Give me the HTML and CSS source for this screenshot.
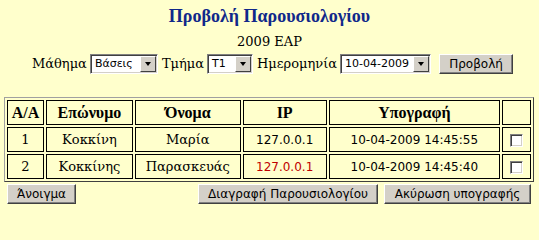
FILE: index.html
```html
<!DOCTYPE html>
<html>
<head>
<meta charset="utf-8">
<link rel="stylesheet" href="styles.css">
</head>
<body>
<div class="page">
  <h1 class="title">Προβολή Παρουσιολογίου</h1>
  <div class="sub">2009 ΕΑΡ</div>
  <div class="form-row">
    <span class="lbl">Μάθημα</span>
    <span class="sel sel-course"><span class="sel-text">Βάσεις</span><span class="sel-btn"><span class="arrow"></span></span></span>
    <span class="lbl">Τμήμα</span>
    <span class="sel sel-class"><span class="sel-text">T1</span><span class="sel-btn"><span class="arrow"></span></span></span>
    <span class="lbl">Ημερομηνία</span>
    <span class="sel sel-date"><span class="sel-text">10-04-2009</span><span class="sel-btn"><span class="arrow"></span></span></span>
    <span class="btn btn-view">Προβολή</span>
  </div>
  <table class="grid">
    <tr class="head">
      <th class="c-aa">A/A</th>
      <th class="c-sur">Επώνυμο</th>
      <th class="c-name">Όνομα</th>
      <th class="c-ip">IP</th>
      <th class="c-sig">Υπογραφή</th>
      <th class="c-chk"></th>
    </tr>
    <tr>
      <td>1</td>
      <td>Κοκκίνη</td>
      <td>Μαρία</td>
      <td class="sans">127.0.0.1</td>
      <td class="sans">10-04-2009 14:45:55</td>
      <td><span class="chk"></span></td>
    </tr>
    <tr>
      <td>2</td>
      <td>Κοκκίνης</td>
      <td>Παρασκευάς</td>
      <td class="sans red">127.0.0.1</td>
      <td class="sans">10-04-2009 14:45:40</td>
      <td><span class="chk"></span></td>
    </tr>
  </table>
  <div class="actions">
    <span class="btn btn-open">Άνοιγμα</span>
    <div class="actions-right">
      <span class="btn btn-del">Διαγραφή Παρουσιολογίου</span>
      <span class="btn btn-cancel">Ακύρωση υπογραφής</span>
    </div>
  </div>
</div>
</body>
</html>
```
FILE: styles.css
```css
html, body {
  margin: 0;
  padding: 0;
  background: #ffffcc;
}
body {
  font-family: "DejaVu Serif", "Liberation Serif", serif;
  font-size: 14px;
  color: #000;
}
.page {
  width: 539px;
  height: 215px;
  overflow: hidden;
  padding-top: 6px;
  box-sizing: border-box;
}
.title {
  margin: 0;
  text-align: center;
  font-family: "Liberation Serif", serif;
  font-size: 18px;
  font-weight: bold;
  color: #10288a;
  line-height: 20px;
  height: 20px;
}
.sub {
  text-align: center;
  margin-top: 8px;
  line-height: 16px;
  height: 16px;
  font-size: 13px;
}
.form-row {
  display: flex;
  justify-content: center;
  align-items: center;
  margin-top: 4px;
  padding-left: 2px;
  height: 20px;
  white-space: nowrap;
}
.lbl {
  margin: 0 3px 0 4px;
  line-height: 16px;
  font-size: 13px;
}
.sel {
  display: inline-flex;
  align-items: stretch;
  height: 20px;
  box-sizing: border-box;
  border: 1px solid;
  border-color: #808080 #ffffff #ffffff #808080;
  background: #fff;
  font-family: "DejaVu Sans", "Liberation Sans", sans-serif;
  font-size: 11px;
  box-shadow: inset 1px 1px 0 #404040, inset -1px -1px 0 #d4d0c8;
  overflow: hidden;
}
.sel-text {
  flex: 1;
  padding: 0 2px 0 4px;
  line-height: 17px;
  white-space: nowrap;
  overflow: hidden;
}
.sel-btn {
  width: 16px;
  flex: none;
  box-sizing: border-box;
  margin: 1px 1px 1px 0;
  background: #d4d0c8;
  border: 1px solid;
  border-color: #ffffff #404040 #404040 #ffffff;
  display: flex;
  align-items: center;
  justify-content: center;
}
.arrow {
  width: 0;
  height: 0;
  border-left: 3.5px solid transparent;
  border-right: 3.5px solid transparent;
  border-top: 4px solid #000;
}
.sel-course { width: 68px; }
.sel-class { width: 46px; }
.sel-date { width: 91px; }
.btn {
  display: inline-flex;
  align-items: center;
  justify-content: center;
  box-sizing: border-box;
  height: 20px;
  background: #d4d0c8;
  border: 1px solid;
  border-color: #ffffff #404040 #404040 #ffffff;
  box-shadow: inset -1px -1px 0 #808080;
  font-family: "DejaVu Sans", "Liberation Sans", sans-serif;
  font-size: 12px;
  color: #000;
  padding: 0 2px;
  white-space: nowrap;
}
.btn-view {
  width: 74px;
  margin-left: 8px;
}
.grid {
  margin: 23px 0 0 4px;
  width: 530px;
  border-collapse: separate;
  border-spacing: 2px;
  border: 1px solid;
  border-color: #a0a0a0 #404040 #404040 #a0a0a0;
}
.grid th, .grid td {
  border: 1px solid #000;
  text-align: center;
  padding: 0;
  font-size: 13px;
}
.grid th {
  height: 23px;
  font-family: "Liberation Serif", serif;
  font-weight: bold;
  font-size: 16px;
}
.grid td {
  height: 23px;
}
.c-aa { width: 35px; }
.c-sur { width: 85px; }
.c-name { width: 104px; }
.c-ip { width: 82px; }
.c-sig { width: 170px; }
.c-chk { width: 27px; }
.grid td.sans {
  font-family: "DejaVu Sans", "Liberation Sans", sans-serif;
  font-size: 12px;
}
.grid td.red { color: #c00000; }
.chk {
  display: inline-block;
  width: 13px;
  height: 13px;
  box-sizing: border-box;
  vertical-align: middle;
  background: #fff;
  border: 1px solid;
  border-color: #808080 #ffffff #ffffff #808080;
  box-shadow: inset 1px 1px 0 #404040, inset -1px -1px 0 #d4d0c8;
}
.actions {
  display: flex;
  justify-content: space-between;
  margin: 2px 8px 0 7px;
}
.actions-right {
  display: flex;
  gap: 6px;
}
.btn-open { width: 69px; }
.btn-del { width: 180px; }
.btn-cancel { width: 147px; }
```
